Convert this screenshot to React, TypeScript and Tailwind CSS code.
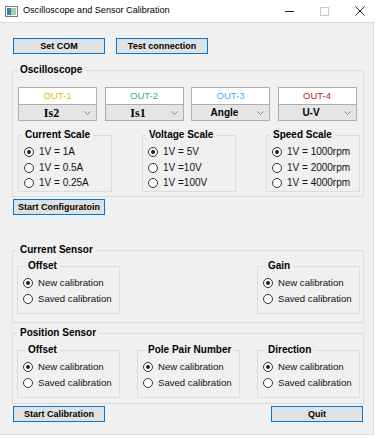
import { ReactNode } from "react";

const sans = "font-['Liberation_Sans',Arial,sans-serif]";

function WinButton({ label, className = "" }: { label: string; className?: string }) {
  return (
    <button
      className={`block h-[16px] w-[92px] border border-[#0078d7] bg-[#e1e1e1] text-[9px] font-bold leading-none text-black ${className}`}
    >
      {label}
    </button>
  );
}

function Group({
  title,
  children,
  className = "",
  legendClass = "ml-[4px]",
}: {
  title: string;
  children: ReactNode;
  className?: string;
  legendClass?: string;
}) {
  return (
    <fieldset className={`border border-[#dcdcdc] ${className}`}>
      <legend className={`px-[3px] text-[10px] font-bold leading-[12px] text-black ${legendClass}`}>
        {title}
      </legend>
      {children}
    </fieldset>
  );
}

function Radio({ label, checked = false, row = "h-[15.5px]", text = "text-[10px]" }: {
  label: string;
  checked?: boolean;
  row?: string;
  text?: string;
}) {
  return (
    <div className={`flex items-center gap-[5px] ${row}`}>
      <span className="flex h-[10px] w-[10px] items-center justify-center rounded-full border border-[#333] bg-white">
        {checked && <span className="h-[4px] w-[4px] rounded-full bg-[#222]" />}
      </span>
      <span className={`${text} leading-none text-[#111]`}>{label}</span>
    </div>
  );
}

const outputs = [
  { name: "OUT-1", color: "text-[#d9bd00]", value: "Is2", serif: true },
  { name: "OUT-2", color: "text-[#3aa98f]", value: "Is1", serif: true },
  { name: "OUT-3", color: "text-[#4ea8ff]", value: "Angle", serif: false },
  { name: "OUT-4", color: "text-[#c41a1a]", value: "U-V", serif: false },
];

const scales = [
  { title: "Current Scale", items: ["1V = 1A", "1V = 0.5A", "1V = 0.25A"] },
  { title: "Voltage Scale", items: ["1V = 5V", "1V =10V", "1V =100V"] },
  { title: "Speed Scale", items: ["1V = 1000rpm", "1V = 2000rpm", "1V = 4000rpm"] },
];

function CalibGroup({ title }: { title: string }) {
  return (
    <Group title={title} className="w-[103px] pb-[6px]" legendClass="ml-[7px]">
      <div className="mt-[3px] pl-[5px]">
        <Radio label="New calibration" checked row="h-[16px]" text="text-[9.6px]" />
        <Radio label="Saved calibration" row="h-[16px]" text="text-[9.6px]" />
      </div>
    </Group>
  );
}

export default function App() {
  return (
    <div className={`h-[439px] w-[377px] bg-white ${sans}`}>
      <div className="flex h-[22px] items-center">
        <svg width="13" height="11" viewBox="0 0 13 11" className="ml-[5px]">
          <rect x="0.5" y="0.5" width="12" height="10" fill="#fff" stroke="#7a7a7a" />
          <rect x="2" y="2" width="4" height="7" fill="#3d7fb8" />
          <rect x="6" y="2" width="5" height="7" fill="#9fd4a8" />
        </svg>
        <span className="ml-[5px] text-[9.1px] text-black">Oscilloscope and Sensor Calibration</span>
        <div className="ml-auto flex items-center">
          <span className="flex w-[35px] justify-center">
            <span className="h-px w-[9px] bg-[#222]" />
          </span>
          <span className="flex w-[35px] justify-center">
            <span className="h-[9px] w-[9px] border border-[#c8c8c8]" />
          </span>
          <span className="flex w-[35px] justify-center">
            <svg width="10" height="10" viewBox="0 0 10 10">
              <path d="M0.5 0.5 L9.5 9.5 M9.5 0.5 L0.5 9.5" stroke="#222" strokeWidth="1" />
            </svg>
          </span>
        </div>
      </div>

      <div className="h-[413px] w-[374px] border-r border-b border-t border-[#dadada] bg-[#f0f0f0] pt-[15px]">
        <div className="ml-[13px] flex gap-[11px]">
          <WinButton label="Set COM" />
          <WinButton label="Test connection" />
        </div>

        <Group title="Oscilloscope" className="ml-[12px] mt-[10px] w-[352px] pb-[4px]">
          <div className="mt-[11px] flex gap-[7.5px] pl-[5px]">
            {outputs.map((o) => (
              <div key={o.name} className="w-[79px]">
                <div
                  className={`flex h-[18px] items-center justify-center border border-[#adadad] bg-white text-[9.5px] leading-none ${o.color}`}
                >
                  {o.name}
                </div>
                <div className="flex h-[16px] items-center border border-t-0 border-[#adadad] bg-[#e5e5e5]">
                  <span
                    className={`flex-1 text-center leading-none font-bold text-black ${
                      o.serif ? "font-['Liberation_Serif',serif] text-[12px]" : "text-[10px]"
                    }`}
                  >
                    {o.value}
                  </span>
                  <svg width="7" height="4" viewBox="0 0 7 4" className="mr-[5px]">
                    <path d="M0.5 0.5 L3.5 3.5 L6.5 0.5" stroke="#777" fill="none" strokeWidth="0.9" />
                  </svg>
                </div>
              </div>
            ))}
          </div>

          <div className="mt-[8px] flex justify-between pl-[5px] pr-[3px]">
            {scales.map((s) => (
              <Group key={s.title} title={s.title} className="w-[94px]" legendClass="ml-[3px]">
                <div className="mt-[3.5px] pl-[5px]">
                  {s.items.map((it, i) => (
                    <Radio key={it} label={it} checked={i === 0} />
                  ))}
                </div>
              </Group>
            ))}
          </div>
        </Group>

        <WinButton label="Start Configuratoin" className="ml-[13px] mt-[2px]" />

        <Group title="Current Sensor" className="ml-[12px] mt-[29px] w-[352px] pb-[8px]">
          <div className="mt-[4px] flex justify-between pl-[4px] pr-[3px]">
            <CalibGroup title="Offset" />
            <CalibGroup title="Gain" />
          </div>
        </Group>

        <Group title="Position Sensor" className="ml-[12px] mt-[4px] w-[352px] pb-[5px]">
          <div className="mt-[5px] flex justify-between pl-[4px] pr-[3px]">
            <CalibGroup title="Offset" />
            <CalibGroup title="Pole Pair Number" />
            <CalibGroup title="Direction" />
          </div>
        </Group>

        <div className="mt-[2px] flex justify-between pl-[13px] pr-[10px]">
          <WinButton label="Start Calibration" />
          <WinButton label="Quit" />
        </div>
      </div>
    </div>
  );
}
